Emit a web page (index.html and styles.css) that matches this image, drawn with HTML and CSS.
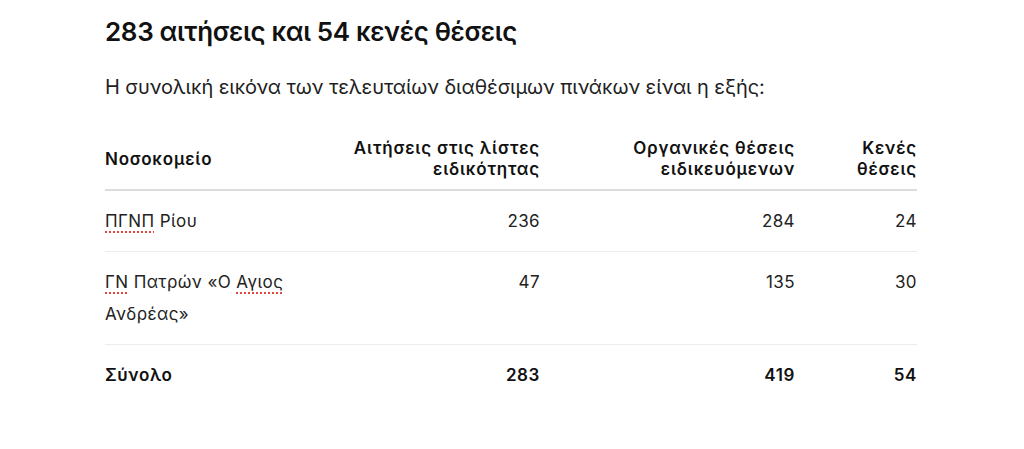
FILE: index.html
```html
<!DOCTYPE html>
<html lang="el">
<head>
<meta charset="utf-8">
<link rel="stylesheet" href="styles.css">
</head>
<body>
<main class="article">
  <h2 class="title">283 αιτήσεις και 54 κενές θέσεις</h2>
  <p class="lead">Η συνολική εικόνα των τελευταίων διαθέσιμων πινάκων είναι η εξής:</p>
  <table class="data">
    <colgroup>
      <col class="c1"><col class="c2"><col class="c3"><col class="c4">
    </colgroup>
    <thead>
      <tr>
        <th class="left">Νοσοκομείο</th>
        <th>Αιτήσεις στις λίστες ειδικότητας</th>
        <th>Οργανικές θέσεις ειδικευόμενων</th>
        <th>Κενές θέσεις</th>
      </tr>
    </thead>
    <tbody>
      <tr>
        <td class="left"><span class="spell">ΠΓΝΠ</span> Ρίου</td>
        <td>236</td>
        <td>284</td>
        <td>24</td>
      </tr>
      <tr>
        <td class="left"><span class="spell">ΓΝ</span> Πατρών «Ο <span class="spell">Αγιος</span><br>Ανδρέας»</td>
        <td>47</td>
        <td>135</td>
        <td>30</td>
      </tr>
      <tr class="total">
        <td class="left">Σύνολο</td>
        <td>283</td>
        <td>419</td>
        <td>54</td>
      </tr>
    </tbody>
  </table>
</main>
</body>
</html>
```
FILE: styles.css
```css
html, body {
  margin: 0;
  padding: 0;
  background: #ffffff;
}
body {
  font-family: Inter, "Noto Sans", "DejaVu Sans", sans-serif;
  color: #1a1a1a;
}
.article {
  width: 812px;
  padding: 17px 0 0 105px;
}
.title {
  margin: 0;
  font-size: 26px;
  line-height: 30px;
  font-weight: 600;
  color: #111;
  letter-spacing: -0.35px;
}
.lead {
  margin: 26px 0 0 0;
  font-size: 20px;
  line-height: 28px;
  color: #1f1f1f;
  letter-spacing: -0.1px;
}
.data {
  margin-top: 37px;
  width: 812px;
  border-collapse: collapse;
  table-layout: fixed;
}
.c1 { width: 210px; }
.c2 { width: 225px; }
.c3 { width: 255px; }
.c4 { width: 122px; }
.data th {
  font-size: 17px;
  line-height: 21px;
  font-weight: 600;
  letter-spacing: 0.8px;
  text-align: right;
  vertical-align: bottom;
  padding: 0 0 9px 20px;
  border-bottom: 2px solid #dcdcdc;
  color: #111;
}
.data td {
  font-size: 17px;
  line-height: 32px;
  letter-spacing: 0.4px;
  text-align: right;
  vertical-align: top;
  padding: 14px 0 14px 20px;
  border-bottom: 1px solid #ececec;
  color: #222;
}
.data .left {
  text-align: left;
  padding-left: 0;
}
.data th.left {
  vertical-align: middle;
}
.data tr.total td {
  font-weight: 600;
  letter-spacing: 0.6px;
  border-bottom: none;
  color: #111;
}
.spell {
  text-decoration-line: underline;
  text-decoration-style: dotted;
  text-decoration-color: #e4453f;
  text-decoration-thickness: 1.5px;
  text-underline-offset: 4px;
}
```
